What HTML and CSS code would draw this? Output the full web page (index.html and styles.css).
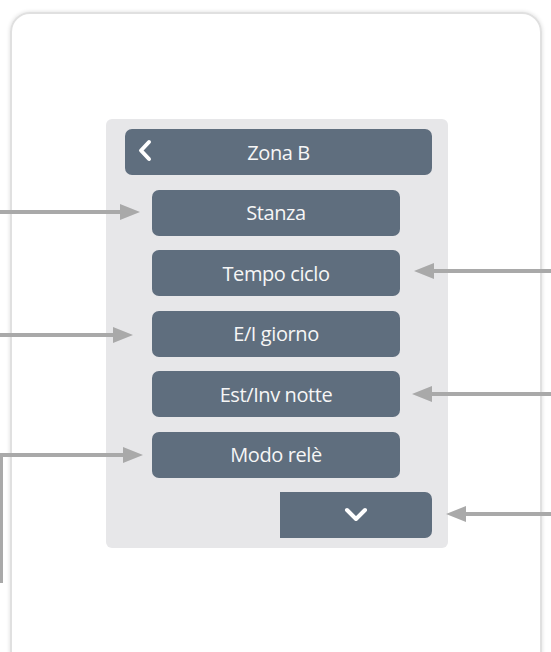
FILE: index.html
```html
<!DOCTYPE html>
<html lang="it">
<head>
    <meta charset="UTF-8">
    <meta name="viewport" content="width=device-width, initial-scale=1.0">
    <title>Zona B</title>
    <link rel="stylesheet" href="styles.css">
</head>
<body>
    <div class="card">
        <div class="panel">
            <div class="header">
                <svg class="back" width="16" height="24" viewBox="0 0 16 24">
                    <path d="M12 3 L4 11.5 L12 20" fill="none" stroke="#fff" stroke-width="4" stroke-linecap="round" stroke-linejoin="round"/>
                </svg>
                <span>Zona B</span>
            </div>
            <div class="btn">Stanza</div>
            <div class="btn">Tempo ciclo</div>
            <div class="btn">E/I giorno</div>
            <div class="btn">Est/Inv notte</div>
            <div class="btn">Modo relè</div>
            <div class="down">
                <svg width="24" height="18" viewBox="0 0 24 18">
                    <path d="M3 4 L12 13 L21 4" fill="none" stroke="#fff" stroke-width="4" stroke-linecap="round" stroke-linejoin="round"/>
                </svg>
            </div>
        </div>
    </div>

    <!-- annotation arrows drawn over the screen -->
    <svg class="arrows" width="551" height="652" viewBox="0 0 551 652">
        <g fill="#a9a9a9">
            <rect x="0" y="210" width="124" height="4"/>
            <polygon points="120,204 140,212 120,220"/>

            <rect x="0" y="333" width="116" height="4"/>
            <polygon points="113,327 133,335 113,343"/>

            <rect x="0" y="453" width="126" height="4"/>
            <rect x="0" y="453" width="3" height="130"/>
            <polygon points="123,447 143,455 123,463"/>

            <rect x="430" y="269" width="121" height="4"/>
            <polygon points="434,263 414,271 434,279"/>

            <rect x="428" y="392" width="123" height="4"/>
            <polygon points="432,386 412,394 432,402"/>

            <rect x="462" y="512" width="89" height="4"/>
            <polygon points="466,506 446,514 466,522"/>
        </g>
    </svg>
</body>
</html>
```

FILE: styles.css
```css
body {
    margin: 0;
    background: #fff;
    font-family: "Open Sans", Arial, sans-serif;
}
.card {
    margin: 12px 0 0 10px;
    width: 532px;
    height: 660px;
    border: 2px solid #e0e0e0;
    border-radius: 20px;
    box-shadow: 0 0 4px rgba(0, 0, 0, 0.14);
    padding: 105px 0 0 94px;
    box-sizing: border-box;
}
.panel {
    width: 342px;
    height: 429px;
    background: #e7e7e9;
    border-radius: 6px;
    padding: 10px 16px 0 19px;
    box-sizing: border-box;
    display: flex;
    flex-direction: column;
    align-items: flex-end;
    gap: 14.5px;
}
.header, .btn, .down {
    height: 46px;
    background: #5f6e7e;
    color: #f6f6f6;
    font-size: 20px;
    letter-spacing: -0.4px;
    display: flex;
    align-items: center;
    justify-content: center;
    box-sizing: border-box;
}
.header {
    width: 100%;
    border-radius: 7px;
    position: relative;
}
.back {
    position: absolute;
    left: 12px;
    top: 10px;
}
.btn {
    width: 248px;
    margin-right: 32px;
    border-radius: 7px;
}
.down {
    width: 152px;
    border-radius: 0 7px 7px 0;
}
.arrows {
    position: absolute;
    left: 0;
    top: 0;
    pointer-events: none;
}
```
